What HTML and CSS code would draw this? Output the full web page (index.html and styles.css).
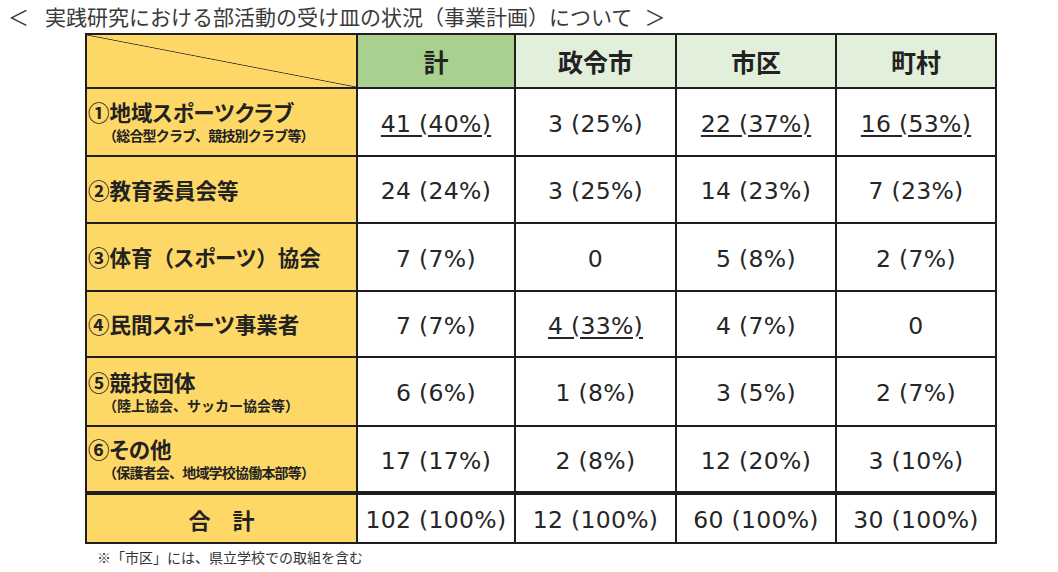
FILE: index.html
```html
<!DOCTYPE html>
<html lang="ja">
<head>
<meta charset="utf-8">
<title>実践研究における部活動の受け皿の状況</title>
<link rel="stylesheet" href="styles.css">
</head>
<body>
<div class="title"><span class="br-l">＜</span>実践研究における部活動の受け皿の状況（事業計画）について<span class="br-r">＞</span></div>
<table class="grid">
  <colgroup>
    <col class="c-label">
    <col class="c-total">
    <col class="c-city">
    <col class="c-ku">
    <col class="c-town">
  </colgroup>
  <tr class="r-head">
    <th class="diag"></th>
    <th class="h-main">計</th>
    <th class="h-sub">政令市</th>
    <th class="h-sub">市区</th>
    <th class="h-sub">町村</th>
  </tr>
  <tr class="r1">
    <th class="label"><div class="main">①地域スポーツクラブ</div><div class="sub tight">（総合型クラブ、競技別クラブ等）</div></th>
    <td><span class="u">41 (40%)</span></td>
    <td>3 (25%)</td>
    <td><span class="u">22 (37%)</span></td>
    <td><span class="u">16 (53%)</span></td>
  </tr>
  <tr class="r2">
    <th class="label"><div class="main">②教育委員会等</div></th>
    <td>24 (24%)</td>
    <td>3 (25%)</td>
    <td>14 (23%)</td>
    <td>7 (23%)</td>
  </tr>
  <tr class="r3">
    <th class="label"><div class="main">③体育<span class="fw">（</span>スポーツ<span class="fw">）</span>協会</div></th>
    <td>7 (7%)</td>
    <td>0</td>
    <td>5 (8%)</td>
    <td>2 (7%)</td>
  </tr>
  <tr class="r4">
    <th class="label"><div class="main">④民間スポーツ事業者</div></th>
    <td>7 (7%)</td>
    <td><span class="u">4 (33%)</span></td>
    <td>4 (7%)</td>
    <td>0</td>
  </tr>
  <tr class="r5">
    <th class="label"><div class="main">⑤競技団体</div><div class="sub">（陸上協会、サッカー協会等）</div></th>
    <td>6 (6%)</td>
    <td>1 (8%)</td>
    <td>3 (5%)</td>
    <td>2 (7%)</td>
  </tr>
  <tr class="r6">
    <th class="label"><div class="main">⑥その他</div><div class="sub tight">（保護者会、地域学校協働本部等）</div></th>
    <td>17 (17%)</td>
    <td>2 (8%)</td>
    <td>12 (20%)</td>
    <td>3 (10%)</td>
  </tr>
  <tr class="r-sum">
    <th class="sum-label">合　計</th>
    <td>102 (100%)</td>
    <td>12 (100%)</td>
    <td>60 (100%)</td>
    <td>30 (100%)</td>
  </tr>
</table>
<p class="note">※「市区」には、県立学校での取組を含む</p>
</body>
</html>
```

FILE: styles.css
```css
html, body {
  margin: 0;
  padding: 0;
  background: #ffffff;
}
body {
  font-family: "Noto Sans CJK JP", "DejaVu Sans", sans-serif;
  color: #222;
  width: 1058px;
  height: 572px;
  overflow: hidden;
}
.title {
  height: 33px;
  line-height: 32px;
  font-size: 21px;
  color: #3a3a3a;
  padding-left: 8px;
  white-space: nowrap;
}
.br-l {
  margin-right: 16px;
}
.br-r {
  margin-left: 12px;
}
.grid {
  margin-left: 85px;
  border-collapse: collapse;
  table-layout: fixed;
  width: 910px;
}
.c-label { width: 271px; }
.c-total { width: 158px; }
.c-city { width: 161px; }
.c-ku { width: 160px; }
.c-town { width: 160px; }
.grid th, .grid td {
  border: 2px solid #1e1e1e;
  padding: 0;
  text-align: center;
  vertical-align: middle;
}
.grid td {
  font-family: "DejaVu Sans", "Noto Sans CJK JP", sans-serif;
  font-size: 23.5px;
  letter-spacing: 0.3px;
  color: #262626;
  background: #ffffff;
  padding-top: 3px;
}
.u {
  text-decoration: underline;
  text-decoration-thickness: 1.5px;
  text-underline-offset: 3px;
}
.r-head { height: 54px; }
.r1 { height: 68px; }
.r2 { height: 67px; }
.r3 { height: 68px; }
.r4 { height: 66px; }
.r5 { height: 69px; }
.r6 { height: 67px; }
.r-sum { height: 50px; }
.diag {
  background-color: #fed866;
  background-image: linear-gradient(to top right, transparent calc(50% - 0.8px), #333 50%, transparent calc(50% + 0.8px));
}
.h-main, .h-sub {
  font-size: 25px;
  font-weight: 700;
  color: #222;
}
.h-main { background: #a9d08e; }
.h-sub { background: #e2efda; }
.label {
  background: #fed866;
  font-weight: 700;
}
.grid th.label {
  text-align: left;
  padding-left: 1px;
}
.main {
  font-size: 21.5px;
  line-height: 26px;
  color: #222;
  font-feature-settings: "palt";
}
.fw {
  font-feature-settings: normal;
}
.sub {
  font-size: 14px;
  line-height: 20px;
  padding-left: 15px;
  color: #222;
}
.sub.tight {
  letter-spacing: -0.8px;
}
.grid .r-sum th, .grid .r-sum td {
  border-top: 4px solid #1e1e1e;
}
.sum-label {
  background: #fed866;
  font-size: 22px;
  font-weight: 700;
}
.note {
  margin: 3px 0 0 97px;
  font-size: 14px;
  line-height: 20px;
  color: #333;
}
```
